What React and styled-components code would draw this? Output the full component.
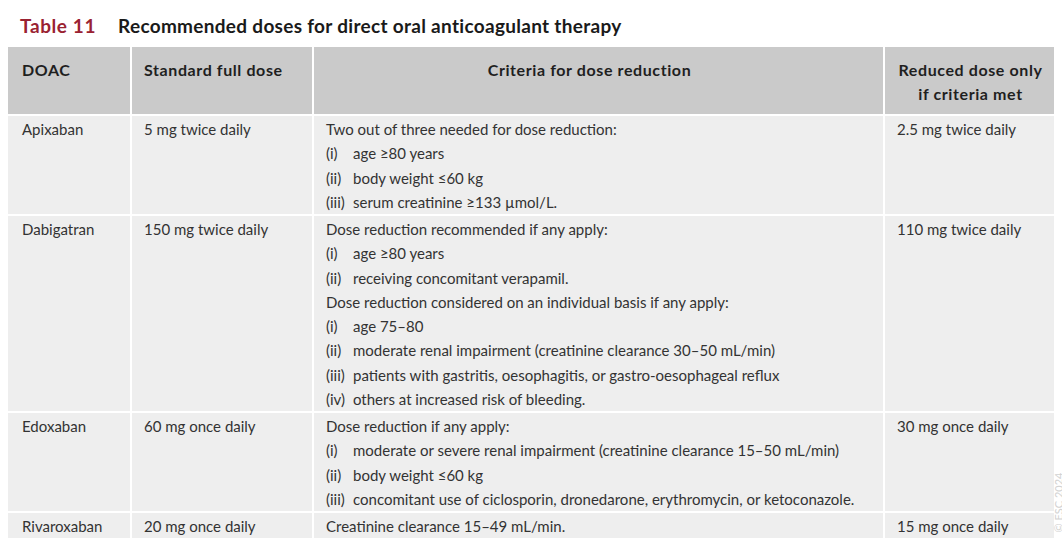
import React from 'react'
import styled, { createGlobalStyle } from 'styled-components'

const rows = [
  {
    drug: 'Apixaban',
    standard: '5 mg twice daily',
    criteria: [
      { text: 'Two out of three needed for dose reduction:' },
      { num: '(i)', text: 'age \u226580 years' },
      { num: '(ii)', text: 'body weight \u226460 kg' },
      { num: '(iii)', text: 'serum creatinine \u2265133 \u00b5mol/L.' },
    ],
    reduced: '2.5 mg twice daily',
  },
  {
    drug: 'Dabigatran',
    standard: '150 mg twice daily',
    criteria: [
      { text: 'Dose reduction recommended if any apply:' },
      { num: '(i)', text: 'age \u226580 years' },
      { num: '(ii)', text: 'receiving concomitant verapamil.' },
      { text: 'Dose reduction considered on an individual basis if any apply:' },
      { num: '(i)', text: 'age 75\u201380' },
      { num: '(ii)', text: 'moderate renal impairment (creatinine clearance 30\u201350 mL/min)' },
      { num: '(iii)', text: 'patients with gastritis, oesophagitis, or gastro-oesophageal reflux' },
      { num: '(iv)', text: 'others at increased risk of bleeding.' },
    ],
    reduced: '110 mg twice daily',
  },
  {
    drug: 'Edoxaban',
    standard: '60 mg once daily',
    criteria: [
      { text: 'Dose reduction if any apply:' },
      { num: '(i)', text: 'moderate or severe renal impairment (creatinine clearance 15\u201350 mL/min)' },
      { num: '(ii)', text: 'body weight \u226460 kg' },
      { num: '(iii)', text: 'concomitant use of ciclosporin, dronedarone, erythromycin, or ketoconazole.' },
    ],
    reduced: '30 mg once daily',
  },
  {
    drug: 'Rivaroxaban',
    standard: '20 mg once daily',
    criteria: [{ text: 'Creatinine clearance 15\u201349 mL/min.' }],
    reduced: '15 mg once daily',
  },
]

const App = () => (
  <Page>
    <GlobalStyle />
    <Caption>
      <Label>Table 11</Label>
      <span>Recommended doses for direct oral anticoagulant therapy</span>
    </Caption>
    <Table>
      <HeadCell first>DOAC</HeadCell>
      <HeadCell>Standard full dose</HeadCell>
      <HeadCell center wide>Criteria for dose reduction</HeadCell>
      <HeadCell center>
        Reduced dose only
        <br />
        if criteria met
      </HeadCell>
      {rows.map((row) => (
        <React.Fragment key={row.drug}>
          <Cell first>{row.drug}</Cell>
          <Cell>{row.standard}</Cell>
          <Cell>
            {row.criteria.map((c, i) => (
              <Line key={i}>
                {c.num && <Num>{c.num}</Num>}
                <span>{c.text}</span>
              </Line>
            ))}
          </Cell>
          <Cell>{row.reduced}</Cell>
        </React.Fragment>
      ))}
    </Table>
    <Copyright>© ESC 2024</Copyright>
  </Page>
)

const GlobalStyle = createGlobalStyle`
  html, body {
    margin: 0;
    padding: 0;
    background: #ffffff;
  }
`

const Page = styled.div`
  position: relative;
  width: 1062px;
  height: 547px;
  padding: 13px 8px 0 8px;
  box-sizing: border-box;
  font-family: Lato, 'Open Sans', sans-serif;
  color: #333333;
  overflow: hidden;
`

const Caption = styled.div`
  display: flex;
  gap: 22px;
  padding-left: 12px;
  height: 34px;
  font-size: 19px;
  font-weight: 700;
  letter-spacing: 0.3px;
  color: #1a1a1a;
  line-height: 26px;
`

const Label = styled.span`
  color: #9a2232;
  letter-spacing: 0.6px;
`

const Table = styled.div`
  display: grid;
  grid-template-columns: 122px 180px 569px 169px;
  gap: 2px;
  background: #ffffff;
`

const HeadCell = styled.div`
  background: #cacaca;
  height: 67px;
  box-sizing: border-box;
  padding: 11px ${(p) => (p.wide ? '28px' : '10px')} 0
    ${(p) => (p.first ? '14px' : p.wide ? '10px' : '12px')};
  font-size: 16px;
  font-weight: 700;
  letter-spacing: 0.6px;
  line-height: 24px;
  color: #1f1f1f;
  text-align: ${(p) => (p.center ? 'center' : 'left')};
`

const Cell = styled.div`
  background: #eeeeee;
  padding: 1px 10px 0 ${(p) => (p.first ? '14px' : '12px')};
  font-size: 15px;
  line-height: 24.25px;
`

const Line = styled.div`
  display: flex;
  white-space: nowrap;
`

const Num = styled.span`
  width: 27px;
  flex-shrink: 0;
`

const Copyright = styled.div`
  position: absolute;
  right: -27px;
  bottom: 38px;
  transform: rotate(-90deg);
  font-size: 11px;
  color: #d2d2d2;
  white-space: nowrap;
`

export default App
